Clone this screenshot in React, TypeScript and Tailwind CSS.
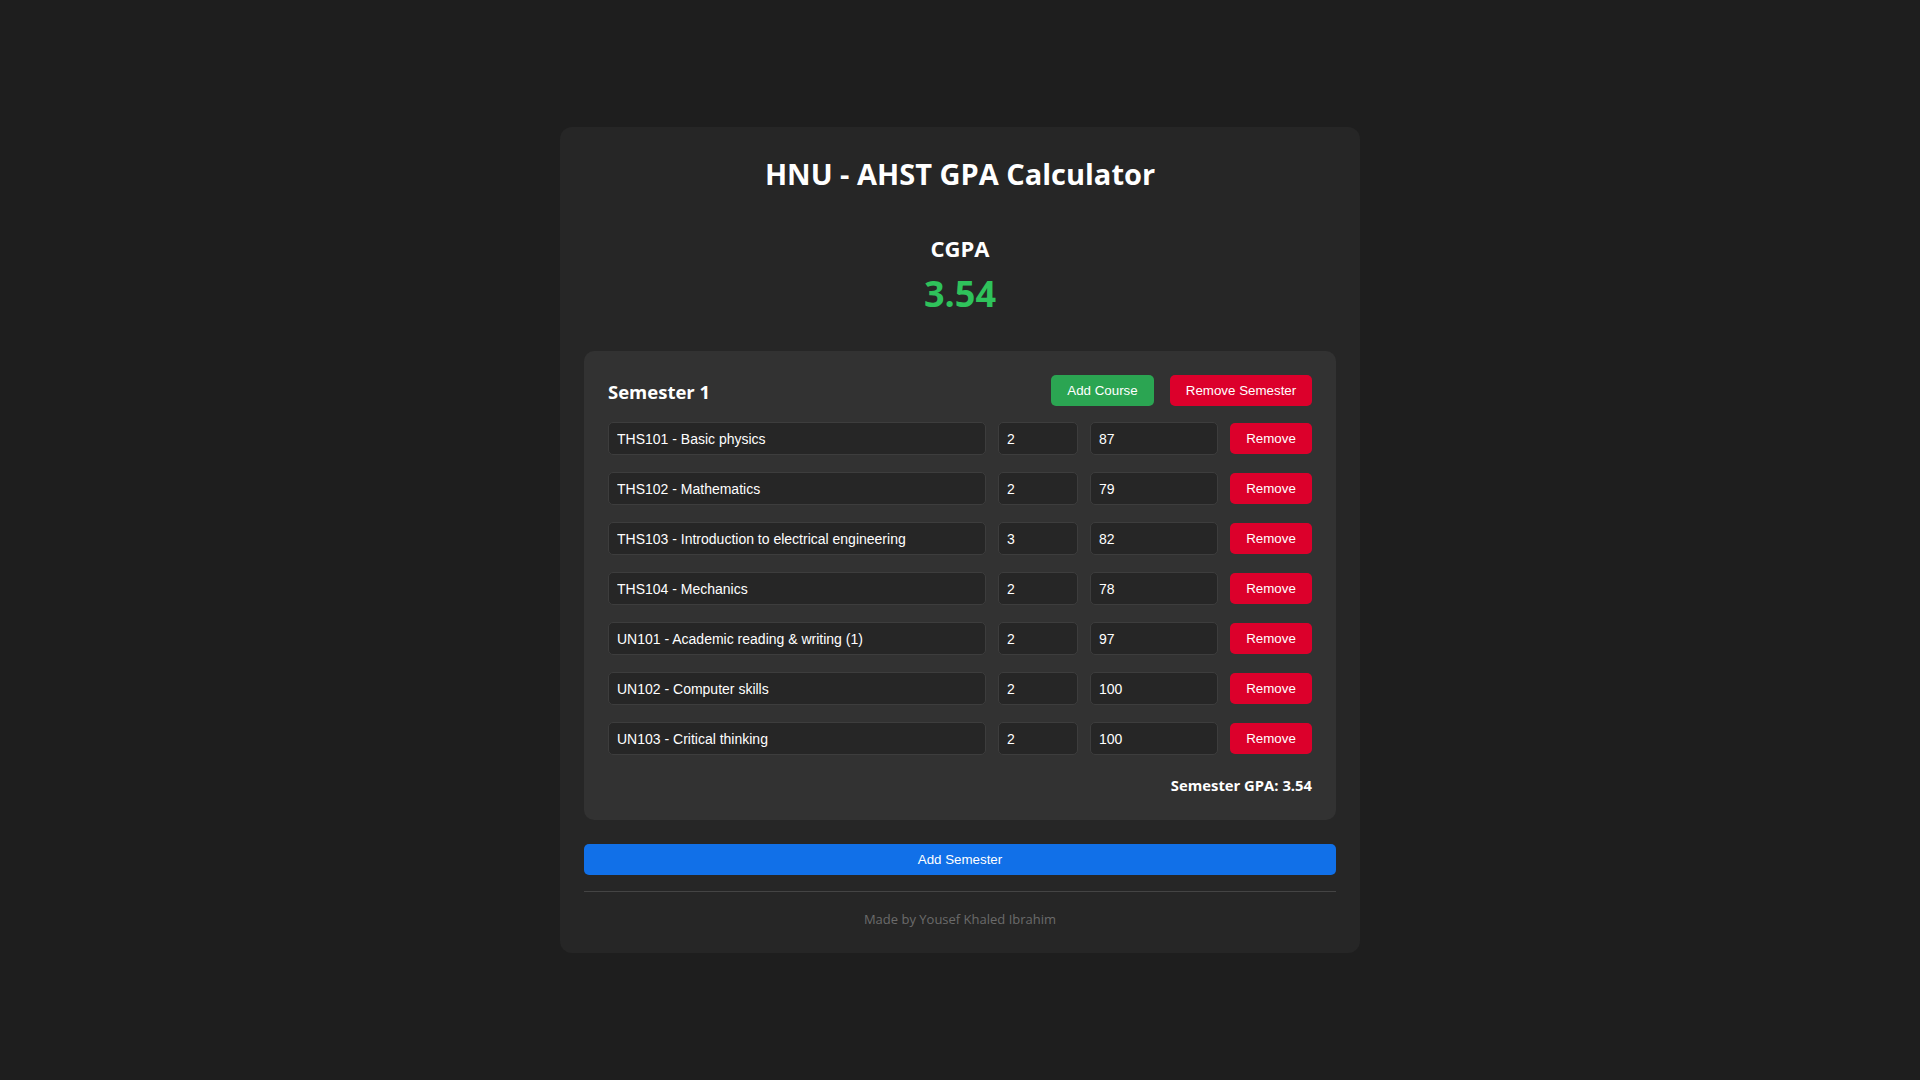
import React, { useState } from "react";

interface Course {
  name: string;
  credits: string;
  grade: string;
}

const initialCourses: Course[] = [
  { name: "THS101 - Basic physics", credits: "2", grade: "87" },
  { name: "THS102 - Mathematics", credits: "2", grade: "79" },
  { name: "THS103 - Introduction to electrical engineering", credits: "3", grade: "82" },
  { name: "THS104 - Mechanics", credits: "2", grade: "78" },
  { name: "UN101 - Academic reading & writing (1)", credits: "2", grade: "97" },
  { name: "UN102 - Computer skills", credits: "2", grade: "100" },
  { name: "UN103 - Critical thinking", credits: "2", grade: "100" },
];

const inputCls =
  "h-[33px] rounded-[5px] border border-[#3d3d3d] bg-[#262626] px-2 text-[14px] text-white outline-none";

const App: React.FC = () => {
  const [courses, setCourses] = useState<Course[]>(initialCourses);

  const update = (i: number, key: keyof Course, value: string) => {
    setCourses((prev) => prev.map((c, idx) => (idx === i ? { ...c, [key]: value } : c)));
  };

  return (
    <div className="flex min-h-screen items-center justify-center bg-[#1e1e1e] font-['Open_Sans',sans-serif] text-white">
      <div className="w-[800px] rounded-xl bg-[#262626] p-6">
        <h1 className="text-center text-[29px] font-bold leading-[46px]">HNU - AHST GPA Calculator</h1>

        <div className="mt-9 text-center">
          <h2 className="text-[22px] font-bold leading-[30px]">CGPA</h2>
          <div className="mt-[9px] text-[36px] font-bold leading-[44px] text-[#2fc25b]">3.54</div>
        </div>

        <div className="mt-[35px] rounded-[10px] bg-[#323232] p-6">
          <div className="flex h-[31px] items-center justify-between">
            <h3 className="mt-[2px] text-[18.5px] font-bold">Semester 1</h3>
            <div className="flex gap-4 font-['Liberation_Sans',Arial,sans-serif] text-[13.333px]">
              <button className="h-[31px] w-[103px] rounded-[5px] bg-[#2ba552] text-white">Add Course</button>
              <button className="h-[31px] w-[142px] rounded-[5px] bg-[#dc002b] text-white">Remove Semester</button>
            </div>
          </div>

          <div className="mt-4 flex flex-col gap-[17px] font-['Liberation_Sans',Arial,sans-serif]">
            {courses.map((c, i) => (
              <div key={i} className="flex items-center gap-3">
                <input className={`${inputCls} flex-1`} value={c.name} onChange={(e) => update(i, "name", e.target.value)} />
                <input className={`${inputCls} w-[80px]`} value={c.credits} onChange={(e) => update(i, "credits", e.target.value)} />
                <input className={`${inputCls} w-[128px]`} value={c.grade} onChange={(e) => update(i, "grade", e.target.value)} />
                <button
                  className="h-[31px] w-[82px] rounded-[5px] bg-[#dc002b] text-[13.333px] text-white"
                  onClick={() => setCourses(courses.filter((_, idx) => idx !== i))}
                >
                  Remove
                </button>
              </div>
            ))}
          </div>

          <div className="mt-[19px] text-right text-[14.8px] font-bold leading-[22px]">Semester GPA: 3.54</div>
        </div>

        <button className="mt-6 h-[31px] w-full rounded-[5px] bg-[#1170e8] font-['Liberation_Sans',Arial,sans-serif] text-[13.333px] text-white">
          Add Semester
        </button>

        <div className="mt-4 border-t border-[#444]" />
        <p className="mt-[17px] text-center text-[13px] leading-5 text-[#6b6b6b]">Made by Yousef Khaled Ibrahim</p>
      </div>
    </div>
  );
};

export default App;
